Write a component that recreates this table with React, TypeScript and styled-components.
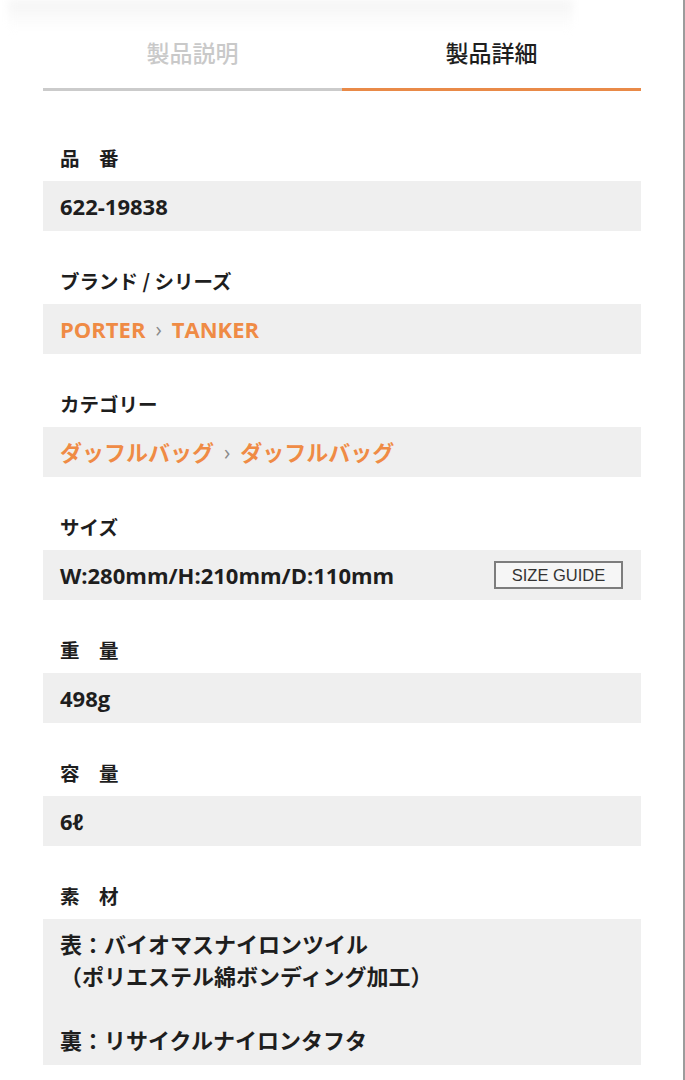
import React from "react";
import styled, { createGlobalStyle } from "styled-components";

const GlobalStyle = createGlobalStyle`
  html, body { margin: 0; padding: 0; background: #ffffff; }
  body { font-family: "Open Sans", "Noto Sans CJK JP", sans-serif; color: #222; }
`;

const Page = styled.div`
  width: 685px;
  min-height: 1080px;
  box-sizing: border-box;
  border-right: 2px solid #9c9c9c;
  background: #fff;
  overflow: hidden;
`;

const TopShade = styled.div`
  height: 30px;
  margin: 0 110px 0 8px;
  background: linear-gradient(#f4f4f4, #fbfbfb 60%, #ffffff);
  filter: blur(4px);
`;

const Content = styled.div`
  padding: 0 42px 0 43px;
  display: flex;
  flex-direction: column;
`;

const Tabs = styled.div`
  display: grid;
  grid-template-columns: 1fr 1fr;
`;

const Tab = styled.div<{ $active?: boolean }>`
  height: 61px;
  box-sizing: border-box;
  padding-bottom: 14px;
  display: flex;
  align-items: center;
  justify-content: center;
  font-family: "Noto Sans CJK JP", sans-serif;
  font-size: 23px;
  font-weight: 500;
  color: ${(p) => (p.$active ? "#1e1e1e" : "#c9c9c9")};
  border-bottom: 3px solid ${(p) => (p.$active ? "#e98a48" : "#cbcbcb")};
`;

const List = styled.div`
  display: flex;
  flex-direction: column;
  gap: 36px;
  margin-top: 53px;
`;

const Section = styled.section`
  display: flex;
  flex-direction: column;
  gap: 9px;
`;

const Label = styled.div`
  padding-left: 17px;
  font-family: "Noto Sans CJK JP", sans-serif;
  font-size: 19.5px;
  font-weight: 700;
  line-height: 28px;
  color: #1e1e1e;
  white-space: pre;
`;

const ValueBox = styled.div`
  background: #efefef;
  padding: 9px 17px;
  display: flex;
  align-items: center;
  justify-content: space-between;
  min-height: 32px;
`;

const Value = styled.div`
  font-family: "Open Sans", "Noto Sans CJK JP", sans-serif;
  font-size: 22px;
  font-weight: 700;
  line-height: 32px;
  color: #1e1e1e;
  white-space: pre-line;
`;

const Crumbs = styled.div`
  display: flex;
  align-items: center;
  gap: 10px;
  font-family: "Open Sans", "Noto Sans CJK JP", sans-serif;
  font-size: 22px;
  font-weight: 700;
  line-height: 32px;
`;

const CrumbLink = styled.span`
  color: #ef8b45;
`;

const Sep = styled.span`
  color: #8a8a8a;
  font-weight: 400;
  font-size: 21px;
`;

const SizeGuide = styled.button`
  width: 129px;
  height: 28px;
  margin-right: 1px;
  border: 2px solid #7d7d7d;
  background: #f6f6f6;
  font-family: "Liberation Sans", Arial, sans-serif;
  font-size: 16.5px;
  color: #333;
  padding: 0;
  cursor: pointer;
`;

const Crumb = ({ items }: { items: string[] }) => (
  <Crumbs>
    {items.map((t, i) => (
      <React.Fragment key={i}>
        {i > 0 && <Sep>›</Sep>}
        <CrumbLink>{t}</CrumbLink>
      </React.Fragment>
    ))}
  </Crumbs>
);

export default function App() {
  return (
    <Page>
      <GlobalStyle />
      <TopShade />
      <Content>
        <Tabs>
          <Tab>製品説明</Tab>
          <Tab $active>製品詳細</Tab>
        </Tabs>
        <List>
          <Section>
            <Label>品　番</Label>
            <ValueBox>
              <Value>622-19838</Value>
            </ValueBox>
          </Section>
          <Section>
            <Label>ブランド / シリーズ</Label>
            <ValueBox>
              <Crumb items={["PORTER", "TANKER"]} />
            </ValueBox>
          </Section>
          <Section>
            <Label>カテゴリー</Label>
            <ValueBox>
              <Crumb items={["ダッフルバッグ", "ダッフルバッグ"]} />
            </ValueBox>
          </Section>
          <Section>
            <Label>サイズ</Label>
            <ValueBox>
              <Value>W:280mm/H:210mm/D:110mm</Value>
              <SizeGuide>SIZE GUIDE</SizeGuide>
            </ValueBox>
          </Section>
          <Section>
            <Label>重　量</Label>
            <ValueBox>
              <Value>498g</Value>
            </ValueBox>
          </Section>
          <Section>
            <Label>容　量</Label>
            <ValueBox>
              <Value>6ℓ</Value>
            </ValueBox>
          </Section>
          <Section>
            <Label>素　材</Label>
            <ValueBox>
              <Value>{"表：バイオマスナイロンツイル\n（ポリエステル綿ボンディング加工）\n\u00a0\n裏：リサイクルナイロンタフタ"}</Value>
            </ValueBox>
          </Section>
        </List>
      </Content>
    </Page>
  );
}
